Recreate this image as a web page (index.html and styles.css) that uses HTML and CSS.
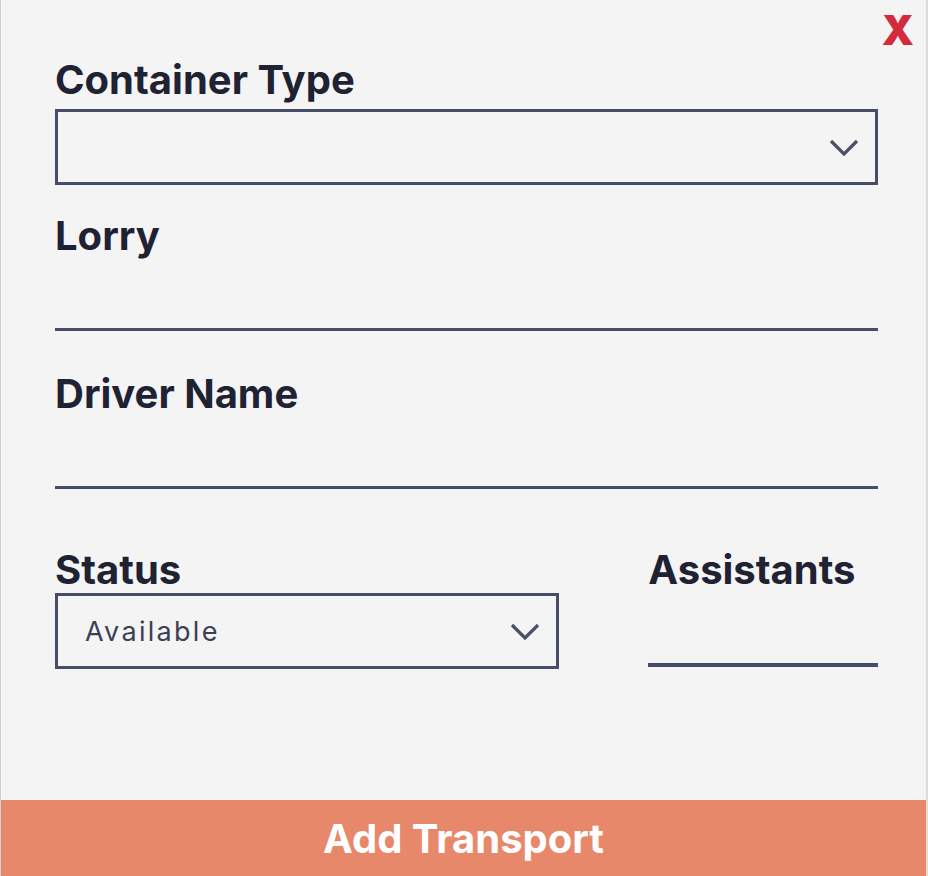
FILE: index.html
```html
<!DOCTYPE html>
<html lang="en">
<head>
<meta charset="utf-8">
<title>Add Transport</title>
<link rel="stylesheet" href="styles.css">
</head>
<body>
<div class="panel">
  <span class="close">X</span>
  <form class="form">
    <div class="field">
      <label class="label">Container Type</label>
      <div class="select">
        <span class="select-value"></span>
        <svg class="chevron" width="30" height="17" viewBox="0 0 30 17"><path d="M2 2 L15 15 L28 2" fill="none" stroke="#4a5068" stroke-width="3.2"/></svg>
      </div>
    </div>
    <div class="field gap-md">
      <label class="label">Lorry</label>
      <div class="line-input"></div>
    </div>
    <div class="field gap-lg">
      <label class="label">Driver Name</label>
      <div class="line-input"></div>
    </div>
    <div class="row">
      <div class="field col-status">
        <label class="label">Status</label>
        <div class="select">
          <span class="select-value">Available</span>
          <svg class="chevron" width="30" height="17" viewBox="0 0 30 17"><path d="M2 2 L15 15 L28 2" fill="none" stroke="#4a5068" stroke-width="3.2"/></svg>
        </div>
      </div>
      <div class="field col-assist">
        <label class="label">Assistants</label>
        <div class="line-input short"></div>
      </div>
    </div>
  </form>
  <button class="submit" type="button">Add Transport</button>
</div>
</body>
</html>
```

FILE: styles.css
```css
html, body {
  margin: 0;
  padding: 0;
  background: #f4f4f4;
}

.panel {
  position: relative;
  box-sizing: border-box;
  width: 928px;
  height: 876px;
  display: flex;
  flex-direction: column;
  background: #f4f4f4;
  border-left: 1px solid #cfcfcf;
  border-right: 2px solid #dcdcdc;
  font-family: "Inter", "Liberation Sans", sans-serif;
}

.close {
  position: absolute;
  top: 5px;
  right: 12px;
  font-family: "Inter", sans-serif;
  font-weight: 900;
  font-size: 41px;
  line-height: normal;
  color: #d42a3c;
  cursor: pointer;
}

.form {
  flex: 1;
  display: flex;
  flex-direction: column;
  padding: 56px 48px 0 54px;
  margin: 0;
}

.field {
  display: flex;
  flex-direction: column;
}

.gap-md { margin-top: 27px; }
.gap-lg { margin-top: 39px; }

.label {
  font-size: 40px;
  font-weight: 700;
  line-height: 48px;
  letter-spacing: 0;
  color: #1f2233;
  white-space: nowrap;
}

.select {
  box-sizing: border-box;
  margin-top: 5px;
  height: 76px;
  border: 3px solid #474d66;
  display: flex;
  align-items: center;
  justify-content: space-between;
  padding: 0 16px 0 27px;
}

.select-value {
  font-size: 27px;
  font-weight: 400;
  color: #3a3f55;
  letter-spacing: 2.3px;
}

.line-input {
  box-sizing: border-box;
  height: 71px;
  border-bottom: 3px solid #474d66;
}

.row {
  display: flex;
  gap: 89px;
  margin-top: 57px;
}

.col-status { width: 505px; }
.col-status .select { margin-top: -1px; height: 76px; }

.col-assist { width: 230px; }

.line-input.short {
  height: 73px;
  border-bottom-width: 4px;
}

.submit {
  flex: none;
  height: 76px;
  width: 100%;
  border: 0;
  margin: 0;
  background: #e8886a;
  color: #ffffff;
  font-family: "Inter", "Liberation Sans", sans-serif;
  font-weight: 700;
  font-size: 40px;
  cursor: pointer;
}
```
